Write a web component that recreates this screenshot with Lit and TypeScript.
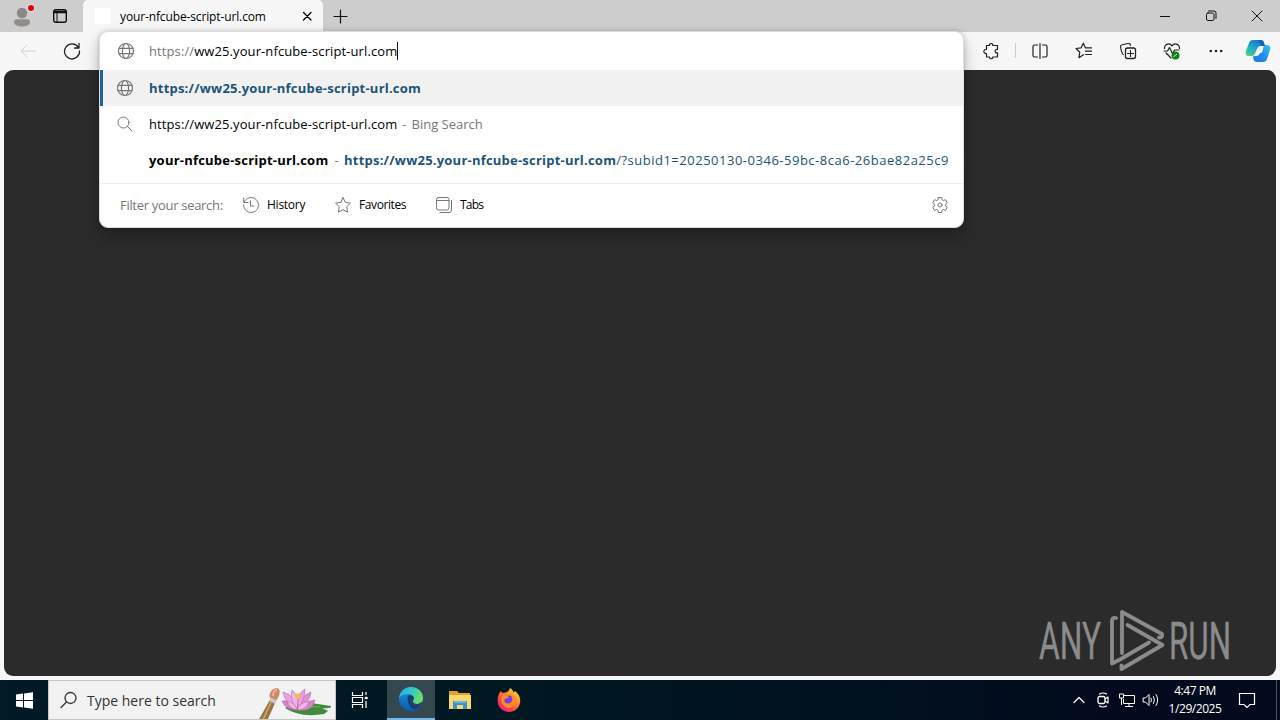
import { LitElement, html, css, svg } from "lit";
import { customElement } from "lit/decorators.js";

const icon = (w: number, h: number, body: unknown) =>
  html`<svg width=${w} height=${h} viewBox="0 0 ${w} ${h}" fill="none" stroke="currentColor" stroke-linecap="round" stroke-linejoin="round">${body}</svg>`;

const globe = icon(18, 18, svg`<circle cx="9" cy="9" r="7.5" stroke-width="1.2"/><ellipse cx="9" cy="9" rx="3.6" ry="7.5" stroke-width="1.2"/><path stroke-width="1.2" d="M2.2 6.3h13.6M2.2 11.7h13.6"/>`);
const back = icon(16, 14, svg`<path d="M15.5 7H1M7 1L1 7l6 6"/>`);
const reload = icon(18, 18, svg`<path stroke-width="1.3" d="M15.4 5.5A7.5 7.5 0 1 0 16.5 9M16 1.5v4.5h-4.5"/>`);
const workspaces = icon(14, 14, svg`<rect x=".7" y=".7" width="12.6" height="12.6" rx="2" stroke-width="1.4"/><path d="M1 2.5h12M1 3.5h12" stroke-width="1.5"/><path d="M4 4v9"/>`);
const profile = svg`<circle cx="22" cy="13" r="5.2" fill="#8a8784" stroke="none"/><path d="M14 22q0-2.8 3-2.8h10q3 0 3 2.8c0 6-16 6-16 0z" fill="#8f8c89" stroke="none"/><circle cx="31" cy="8" r="4" fill="#e3dddd" stroke="none"/><circle cx="31" cy="8" r="3" fill="#e3000f" stroke="none"/>`;
const puzzle = icon(18, 18, svg`<path stroke-width="1.2" d="M4.500 3.500H7.500C7 .8 11.300.8 10.800 3.500H15.500V7.500c-3.200-.6-3.200 4 0 3.400V15h-4.700c.3 2.300-3.600 2.300-3.300 0H4.500v-3.500C1 12 1 6.800 4.500 7.300z"/>`);
const splitIcon = icon(18, 18, svg`<path stroke-width="1.2" d="M6.500 3H3.500Q2 3 2 4.500v9Q2 15 3.500 15h3M11.500 3h3Q16 3 16 4.500v9q0 1.500-1.500 1.500h-3M9 1.500v15"/>`);
const favList = icon(18, 18, svg`<path stroke-width="1.2" d="M8.500 12.700l-4.600 3 .9-5.500-3.800-3.700 5-.6L8.300 1.200l2.200 4.700h6M10.500 9.200h6M10.500 12.500h6"/>`);
const collections = icon(18, 18, svg`<rect x="6.500" y="6" width="10" height="10.500" rx="2" stroke-width="1.300"/><path stroke-width="1.1" d="M11.500 8.500v6M8.500 11.500h6M4.300 12.500C3 12 1.500 5.800 1.500 4.500S2.300 3 3.300 2.800L9 1.500c1.400-.3 2.200.4 2.500 2"/>`);
const health = icon(18, 18, svg`<path stroke-width="1.2" d="M1.500 6.500C1.500 1.500 7 .5 9 4c2-3.500 7.500-2.500 7.500 2.500M3 11l5 5M1 9h3.500L6.500 5.500l3 6L11.500 8H16"/><circle cx="12.500" cy="13.500" r="4" fill="#13801b" stroke="none"/><path d="M10.800 14.500l3-2.200" stroke="#cfe8d0"/>`);
const dots = icon(16, 4, svg`<g fill="currentColor" stroke="none"><circle cx="2.800" cy="2" r="1.300"/><circle cx="8" cy="2" r="1.300"/><circle cx="13.200" cy="2" r="1.300"/></g>`);
const copilot = html`<svg width="26" height="24" viewBox="0 0 26 24"><defs><linearGradient id="ca" x1="0" y1="1" x2=".6" y2="0"><stop offset="0" stop-color="#52d37b"/><stop offset=".5" stop-color="#20afc4"/><stop offset="1" stop-color="#1477cd"/></linearGradient><linearGradient id="cb" x1="0" y1="1" x2="1" y2="0"><stop offset="0" stop-color="#1578df"/><stop offset=".5" stop-color="#258bf0"/><stop offset="1" stop-color="#32c5f5"/></linearGradient></defs><path fill="url(#ca)" d="M8 1h7q3 0 3.500 4l.5 2h-3q-3 0-4 3l-2.200 5q-.8 2-3 2H4Q-.5 17 1 12L4 4q1-3 4-3z"/><path fill="url(#cb)" d="M19 6h2q5.500 0 4 5L22 20q-1 3-4 3h-6q-2.800 0-3.500-3L8 17.500q3 0 4-2.500l5-1.500L19 6z"/><path fill="#f7f7f7" d="M13 9q.8-2 3-2h1.300l-2.400 7.500q-1 2.500-3.800 2.500H9q1.600-.6 2.200-2.500z"/><path fill="#1262b5" d="M14 1h2q2.500 0 3.200 3l.7 3h-3q-1.500-1-2.900-6z"/></svg>`;
const search = icon(18, 18, svg`<circle cx="7.500" cy="7.500" r="5.500"/><path d="M11.500 11.500L16 16"/>`);
const history = icon(18, 18, svg`<path d="M1.700 2v4.500h4.500M2 6.300A7.500 7.500 0 1 1 1.500 9M8.500 5v5H12"/>`);
const star = icon(18, 18, svg`<path d="M9 1.500l2.300 4.900 5.200.7-3.800 3.700.9 5.400L9 13.600l-4.600 2.600.9-5.400L1.500 7.100l5.200-.7z"/>`);
const tabs = icon(18, 18, svg`<rect x="1.500" y="1.500" width="12.500" height="12.500" rx="2"/><path d="M1.500 4.500H14M16.500 4.500V14q0 2.500-2.500 2.500H5"/>`);
const gear = icon(18, 18, svg`<circle cx="9" cy="9" r="2"/><path d="M7.300 1.500h3.400l.4 2.300 1.200.7 2.200-.8 1.700 3-1.800 1.500v1.600l1.800 1.500-1.700 3-2.200-.8-1.200.7-.4 2.300H7.300l-.4-2.300-1.200-.7-2.200.8-1.700-3 1.800-1.500V8.200L1.800 6.700l1.700-3 2.200.8 1.200-.7z"/>`);

@customElement("app-root")
export class AppRoot extends LitElement {
  static styles = css`
    :host { display: block; font-family: "Open Sans", "Noto Sans", sans-serif; font-size: 13px; color: #111; }
    .screen { position: relative; display: flex; flex-direction: column; width: 1280px; height: 720px; overflow: hidden; background: #f7f7f7; }
    svg { display: block; flex: none; }
    .cell { display: flex; align-items: center; justify-content: center; flex: none; width: 44px; height: 100%; }
    .push { margin-left: auto; }
    .strip { display: flex; height: 32px; background: #cdcdcd; }
    .w32 { width: 32px; }
    .tab { display: flex; align-items: center; box-sizing: border-box; width: 240px; height: 32px; margin-left: 7px; padding: 0 9px 0 12px; background: #f7f7f7; border-radius: 5px 5px 0 0; font-size: 12px; color: #000; }
    .favicon { width: 15px; height: 16px; margin-right: 10px; background: #fff; }
    .tabtitle { letter-spacing: -0.13px; white-space: nowrap; flex: 1; }
    .plus { width: 34px; }
    .wc { width: 46px; }
    .toolbar { display: flex; height: 38px; color: #222; }
    .back { width: 56px; color: #d0d0d0; }
    .sep { width: 1px; height: 15px; margin: 11px 2px 0; background: #ccc; }
    .copilot { width: 40px; margin-right: 2px; }
    .page { display: flex; justify-content: flex-end; align-items: flex-end; box-sizing: border-box; height: 606px; margin: 0 4px; padding: 0 36px 3px; background: #2b2b2b; border-radius: 9px; }
    .logo { overflow: visible; }
    .drop { position: absolute; left: 99px; top: 31px; width: 865px; height: 197px; box-sizing: border-box; background: #fff; border: 1px solid #ddd; border-radius: 9px; box-shadow: 0 8px 16px rgba(0,0,0,.25), 0 0 5px rgba(0,0,0,.16); overflow: hidden; }
    .drop span { white-space: pre; }
    .row { display: flex; align-items: center; height: 36px; box-sizing: border-box; padding-left: 16px; color: #000; }
    .row svg, .filters svg { color: #777; }
    .row svg { margin-right: 15px; }
    .row.input { height: 38px; padding-left: 17px; }
    .row.input svg { margin-right: 14px; }
    .row.sel { background: #f1f1f1; border-left: 3px solid #236290; padding-left: 13px; }
    .row .blank { width: 33px; }
    .muted { color: #777; }
    .url { color: #1c5479; }
    .b { font-weight: 700; }
    .caret { width: 1px; height: 18px; background: #111; }
    .dash { margin: 0 5px; }
    .dash.wide { margin: 0 5.5px 0 6px; }
    .filters { display: flex; align-items: center; height: 43px; box-sizing: border-box; margin-top: 5px; padding: 0 14px 0 20px; border-top: 1px solid #ededed; font-size: 12px; color: #000; }
    .filters .muted { font-size: 13px; letter-spacing: -0.3px; width: 103px; margin-right: 19px; }
    .flabel { margin-left: 7px; letter-spacing: -0.4px; line-height: 16px; padding-bottom: 1px; }
    .history { width: 67px; letter-spacing: -0.25px; }
    .favorites { width: 76px; }
    .tabslabel { letter-spacing: -0.8px; }
    .taskbar { display: flex; height: 40px; margin-top: 4px; background: linear-gradient(90deg,#001b25,#001721 45%,#020a1d 90%); color: #fff; }
    .start { width: 48px; }
    .searchbox { display: flex; align-items: center; box-sizing: border-box; width: 288px; height: 40px; padding-left: 11px; background: #f2f2f2; border: 1px solid #c6c6c6; color: #333; font-size: 14px; white-space: nowrap; }
    .searchbox .q { margin-left: 9px; }
    .searchbox .art { margin-left: auto; }
    .app { width: 48px; }
    .active { background: #35474f; border-bottom: 2px solid #76b9ed; box-sizing: border-box; margin-left: 3px; }
    .gap { margin-left: 1px; }
    .t24 { width: 24px; }
    .clock { width: 64px; display: flex; flex-direction: column; align-items: center; justify-content: center; font-size: 12px; line-height: 18px; letter-spacing: -0.45px; white-space: nowrap; }
    .note { width: 40px; }
    .edge { width: 3px; margin-left: 9px; border-left: 1px solid #4a5360; }
    .s1 { letter-spacing: 0.1px; } .s2 { letter-spacing: 0.22px; } .s3 { letter-spacing: 0.51px; }
    .mark { font-family: Roboto, sans-serif; font-size: 52px; font-weight: 400; }
  `;

  render() {
    return html`<div class="screen">
      <div class="strip">
        <div class="cell">${icon(44, 32, profile)}</div>
        <div class="cell w32">${workspaces}</div>
        <div class="tab"><span class="favicon"></span><span class="tabtitle">your-nfcube-script-url.com</span>${icon(14, 14, svg`<path stroke-width="1.300" d="M3.500 3.500l7.500 7.500M11 3.500l-7.500 7.500"/>`)}</div>
        <div class="cell plus">${icon(15, 15, svg`<path stroke-width="1.200" d="M7.500 1v13M1 7.500h13"/>`)}</div>
        <div class="cell wc push">${icon(10, 10, svg`<path d="M0 5.500h10" stroke-linecap="butt"/>`)}</div>
        <div class="cell wc">${icon(12, 12, svg`<rect x="1.500" y="3" width="7.500" height="7.500" rx="1.500"/><path d="M3.500 1H9q2 0 2 2v5.500"/>`)}</div>
        <div class="cell wc">${icon(12, 12, svg`<path d="M1 1l10 10M11 1L1 11"/>`)}</div>
      </div>
      <div class="toolbar">
        <div class="cell back">${back}</div>
        <div class="cell w32">${reload}</div>
        <div class="cell push">${puzzle}</div><span class="sep"></span>
        <div class="cell">${splitIcon}</div><div class="cell">${favList}</div>
        <div class="cell">${collections}</div><div class="cell">${health}</div>
        <div class="cell">${dots}</div><div class="cell copilot">${copilot}</div>
      </div>
      <div class="page">
        <svg class="logo" width="208" height="64" viewBox="1032 609 208 64">
          <g fill="#8b8b8b" stroke="#8b8b8b" stroke-width=".4"><text class="mark" x="1039" y="659" textLength="62" lengthAdjust="spacingAndGlyphs">ANY</text><text class="mark" x="1169" y="659" textLength="62" lengthAdjust="spacingAndGlyphs">RUN</text></g>
          <g fill="none" stroke="#8b8b8b" stroke-width="3.800" stroke-linejoin="round" stroke-linecap="round"><path d="M1116 618q-4-1-4 3v42.500l8-4 29-17"/><path d="M1122 653v-41l40 22q1 4-3 3.500"/><path d="M1127.500 625l35 20-41 24v-3.500"/></g>
        </svg>
      </div>
      <div class="taskbar">
        <div class="cell start"><svg width="17" height="17" viewBox="0 0 17 17" fill="#fff"><path d="M0 2.600L7 1.600v6.500H0zM8 1.500L17 .2v7.900H8zM0 9h7v6.400l-7-1zM8 9h9v7.800l-9-1.300z"/></svg></div>
        <div class="searchbox">${icon(18, 18, svg`<circle cx="10.500" cy="7" r="5.500" stroke-width="1.300"/><path d="M6.500 11L1 16.500" stroke-width="1.300"/>`)}<span class="q">Type here to search</span>
          <svg class="art" width="76" height="38" viewBox="259 681 76 38">
            <path d="M271 698l5 3-9 20h-9z" fill="#9a7446"/><path d="M272 700l-9 20" stroke="#d0aa72" stroke-width="1.500"/><path d="M270 696l7 3-2 5-5-3z" fill="#c5c7cb"/><path d="M269.500 697c-.5-5 3-9 8-9 4 2 2 8-1 12z" fill="#cf8a65"/><path d="M273 696c0-4 2-6 4-6" stroke="#ebb796" stroke-width="2" fill="none"/>
            <path d="M285 708q13-7 26-5l20 3q1 3-9 2l6 3-4 3q-24 4-39-6z" fill="#428b3c"/><path d="M294 710q15-5 26-3" stroke="#80b260" fill="none"/>
            <g stroke="#b75bae" stroke-width=".5"><path d="M298 710q-13 0-16-9 9-2 16 9z" fill="#d682ca"/><path d="M298 710q15 2 17-10-11 1-17 10z" fill="#d586cb"/><path d="M297 709q-13-7-14-17 12 3 14 17z" fill="#e7a3dd"/><path d="M298 709q12-6 13-17-11 4-13 17z" fill="#dc91d1"/><path d="M297 709q-8-10-5-19 8 6 5 19z" fill="#efb3e4"/><path d="M298 709q7-10 7-20-9 5-7 20z" fill="#e99fdd"/><path d="M297 710q-8-2-10-9 8 2 10 9 4-9 12-8-3 8-12 8z" fill="#efb8e5"/></g><circle cx="298" cy="696" r="2.800" fill="#efbd5a"/>
          </svg></div>
        <div class="cell app">${icon(18, 16, svg`<path stroke-linecap="butt" stroke-linejoin="miter" stroke-width="1.200" d="M1.500 0v3.500h10V0M1.500 16v-3.500h10V16M1.500 5.500h10v5h-10zM15 0v3M15 9v7M13.500 6h3"/><path stroke-width="2.500" d="M15 6h.5"/>`)}</div>
        <div class="cell app active"><svg width="24" height="24" viewBox="0 0 24 24"><defs><linearGradient id="e1" x1="0" y1="0" x2="1" y2=".4"><stop stop-color="#29a9e8"/><stop offset=".5" stop-color="#30c4cd"/><stop offset="1" stop-color="#68df68"/></linearGradient><linearGradient id="e2" x1="0" y1="0" x2="0" y2="1"><stop stop-color="#189ae2"/><stop offset="1" stop-color="#0d58aa"/></linearGradient></defs><circle cx="12" cy="12" r="12" fill="url(#e2)"/><path d="M0 11C1 4 6 0 12 0c7 0 12 5 12 11 0 4-3 6-6 6-2 0-5-1-4-3 3-4-1-7-5-7-4 0-7 1-9 4z" fill="url(#e1)"/><path d="M8.500 11c0-3 3-4 5-2 2 1.500 1 3 .4 5-.6 2 2 3.500 4.500 3 2-.3 3.500-1.300 4.500-2-1 4-4 6.500-7 7-4 0-7.400-5-7.400-11z" fill="#123f75"/><path d="M14.500 11c.2 2-.9 2-.5 4 .6 2 3 2.600 5 2 2-.4 3.400-1.400 4-2.600l.8 1.100q-1.300 1.800-3 2.900-7 1.600-8.800-2.400-1-3 2.500-5z" fill="#35474f" opacity=".85"/></svg></div>
        <div class="cell app gap"><svg width="22" height="18" viewBox="0 0 22 18"><path d="M0 0h8l2 2h11v5H0z" fill="#e1a32e"/><path d="M0 4h22v14H0z" fill="#fbd668"/><path d="M4 10h14v8h-4v-4H8v4H4z" fill="#3c91d0"/><path d="M5 10h12v2H5z" fill="#62b5e6"/></svg></div>
        <div class="cell app gap"><svg width="24" height="24" viewBox="0 0 24 24"><defs><linearGradient id="f1" x1="1" y1="0" x2=".2" y2="1"><stop stop-color="#fff04d"/><stop offset=".4" stop-color="#ff9629"/><stop offset=".75" stop-color="#ff3d4b"/><stop offset="1" stop-color="#e8208a"/></linearGradient></defs><path d="M2 6l1.500-3 2 2L8 4.500C10 4.500 12 3 13 0c2 1 3 2.500 3.500 4.500L18 3c4 3 5.500 7 5.200 10.500C22.500 20 17.500 24 12 24S1 20 .7 13C.5 10 1 8 2 6z" fill="url(#f1)"/><circle cx="12.500" cy="13" r="5.500" fill="#7440dd"/><path d="M5 8c3-1 5 0 7 1-1 2-4 1-5 3 0 4 6 5 8 1 1-3-1-5-2-7 5 1 7 6 5 10-2 5-10 5-13 0-1-3-1-6 0-8z" fill="#ff8a2c"/></svg></div>
        <div class="cell t24 push">${icon(12, 8, svg`<path stroke-width="1.200" d="M1 6.500l5-5 5 5"/>`)}</div>
        <div class="cell t24">${icon(14, 18, svg`<rect x="2" y="5.500" width="7" height="7" rx="1.500" stroke-width="1.300"/><path stroke-width="1.200" d="M9 8l3-2v6l-3-2M3.500 3q3.500-2 7 0M3.500 15q3.500 2 7 0"/>`)}</div>
        <div class="cell t24">${icon(18, 16, svg`<path stroke-linecap="butt" stroke-linejoin="miter" d="M6 3.500h10.500v8H5.500V7M11 11.500V14M7 14.500h8M1.500 2h4v4h-4zM3.500 6v7"/>`)}</div>
        <div class="cell t24">${icon(18, 16, svg`<path d="M1.500 6h2L7 2.500v11L3.500 10h-2zM9 6q1 2 0 4M11.500 4.500q2 3.500 0 7M14 2.500q3.500 5.500 0 11"/>`)}</div>
        <div class="clock"><span class="time">4:47 PM</span><span class="date">1/29/2025</span></div>
        <div class="cell note">${icon(18, 18, svg`<path stroke-linejoin="miter" stroke-width="1.200" d="M1.500 2.500h15v11H12l-3 3-3-3H1.500z"/>`)}</div>
        <div class="edge"></div>
      </div>
      <div class="drop">
        <div class="row input">${globe}<span class="muted s1">https://</span><span class="s1">ww25.your-nfcube-script-url.com</span><span class="caret"></span></div>
        <div class="row sel">${globe}<span class="url b s2">https://ww25.your-nfcube-script-url.com</span></div>
        <div class="row">${search}<span class="s1">https://ww25.your-nfcube-script-url.com</span><span class="muted dash">-</span><span class="muted">Bing Search</span></div>
        <div class="row"><span class="blank"></span><span class="b s2">your-nfcube-script-url.com</span><span class="muted dash wide">-</span><span class="url b s2">https://ww25.your-nfcube-script-url.com</span><span class="url s3">/?subid1=20250130-0346-59bc-8ca6-26bae82a25c9</span></div>
        <div class="filters"><span class="muted">Filter your search:</span>${history}<span class="flabel history">History</span>${star}<span class="flabel favorites">Favorites</span>${tabs}<span class="flabel tabslabel">Tabs</span><span class="push">${gear}</span></div>
      </div>
    </div>`;
  }
}
